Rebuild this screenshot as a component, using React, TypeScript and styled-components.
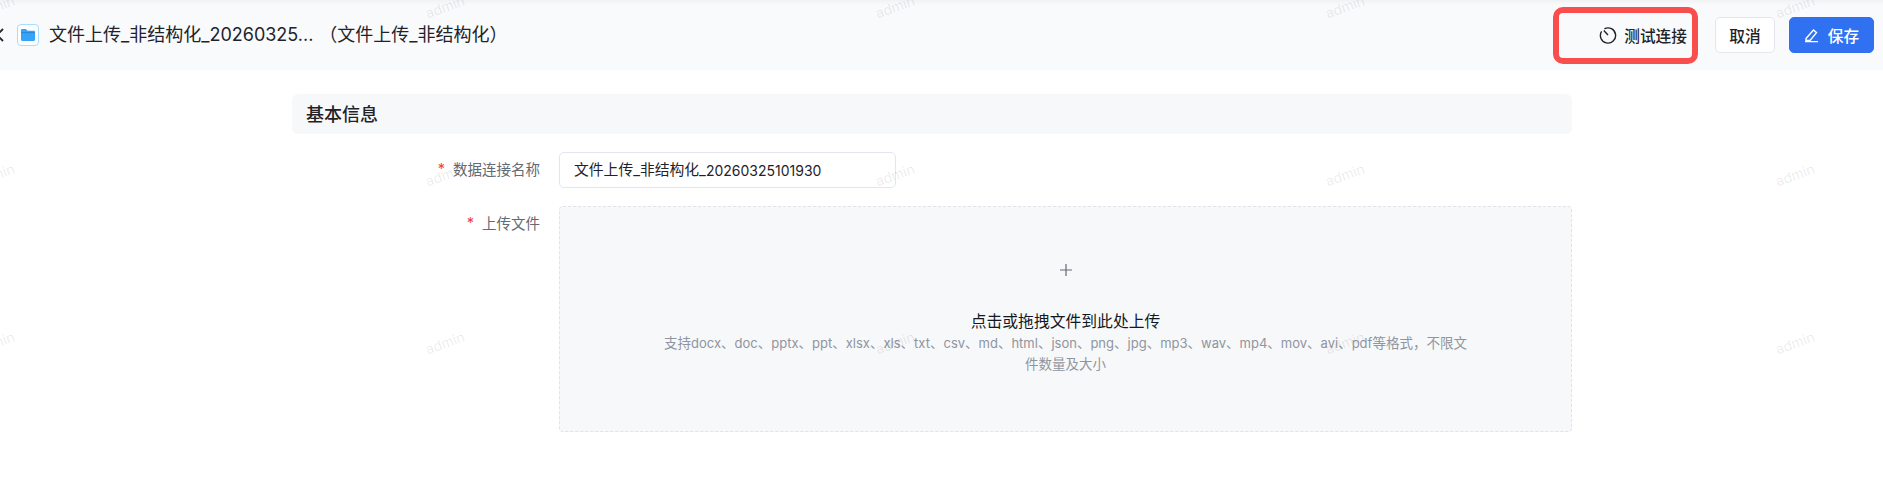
import React from "react";
import styled, { createGlobalStyle } from "styled-components";

const Global = createGlobalStyle`
  html, body { margin: 0; padding: 0; background: #fff; }
  body { font-family: Inter, "Noto Sans CJK SC", sans-serif; color: #1f2329; }
`;

const Page = styled.div`
  position: relative;
  width: 1883px;
  height: 480px;
  overflow: hidden;
  background: #fff;
`;

const Header = styled.header`
  height: 70px;
  box-sizing: border-box;
  display: flex;
  align-items: center;
  padding: 0 9px 0 0;
  background: linear-gradient(#f1f2f4 0, #f9fafc 5px);
`;

const Back = styled.svg`
  width: 14px;
  height: 16px;
  margin-left: -9px;
  margin-right: 12px;
  flex: none;
`;

const FileBadge = styled.span`
  width: 22px;
  height: 22px;
  box-sizing: border-box;
  display: flex;
  align-items: center;
  justify-content: center;
  border: 1px solid #a9dcff;
  border-radius: 4px;
  background: #fbfdff;
  margin-right: 10px;
  flex: none;
`;

const Title = styled.h1`
  margin: 0;
  font-size: 18px;
  font-weight: 400;
  line-height: 24px;
  color: #1f2329;
  white-space: nowrap;
`;

const Suffix = styled.span`
  margin-left: 6px;
`;

const Actions = styled.div`
  margin-left: auto;
  display: flex;
  align-items: center;
`;

const Highlight = styled.div`
  width: 145px;
  height: 57px;
  box-sizing: border-box;
  border: 6px solid #f94e4e;
  border-radius: 10px;
  display: flex;
  align-items: center;
  justify-content: flex-end;
  gap: 7px;
  padding-right: 5px;
  margin-right: 17px;
  font-size: 15.7px;
  font-weight: 500;
  color: #1f2329;
`;

const Button = styled.button<{ $primary?: boolean }>`
  height: 36px;
  box-sizing: border-box;
  display: flex;
  align-items: center;
  justify-content: center;
  gap: 8px;
  padding: 0;
  width: ${(p) => (p.$primary ? "85px" : "60px")};
  margin-left: ${(p) => (p.$primary ? "14px" : "0")};
  border: 1px solid ${(p) => (p.$primary ? "#3071f2" : "#e4e6eb")};
  border-radius: 5px;
  background: ${(p) => (p.$primary ? "#3071f2" : "#fff")};
  color: ${(p) => (p.$primary ? "#fff" : "#1f2329")};
  font-family: inherit;
  font-size: 15.7px;
  font-weight: 500;
`;

const Body = styled.main`
  width: 1280px;
  margin: 24px 0 0 292px;
`;

const SectionBar = styled.div`
  height: 40px;
  box-sizing: border-box;
  display: flex;
  align-items: center;
  padding: 0 0 2px 14px;
  background: #f7f8fa;
  border-radius: 6px;
  font-size: 18px;
  font-weight: 500;
  color: #1f2329;
`;

const Row = styled.div`
  display: grid;
  grid-template-columns: 248px 1013px;
  column-gap: 19px;
  margin-top: 18px;
`;

const Label = styled.label`
  display: flex;
  justify-content: flex-end;
  align-items: center;
  height: 33px;
  font-size: 14.5px;
  color: #646a73;
`;

const Star = styled.span`
  color: #f5403d;
  margin-right: 8px;
`;

const TextField = styled.div`
  width: 337px;
  height: 36px;
  box-sizing: border-box;
  display: flex;
  align-items: center;
  white-space: pre;
  border: 1px solid #e4e6ef;
  border-radius: 5px;
  padding: 0 14px;
  background: #fff;
  font-size: 14px;
  color: #1f2329;
`;

const Han = styled.span<{ $size: number }>`
  font-size: ${(p) => p.$size}px;
  line-height: 1;
`;

const Dropzone = styled.div`
  height: 226px;
  box-sizing: border-box;
  border: 1px dashed #e1e3ea;
  border-radius: 4px;
  background: #f7f8fa;
  display: flex;
  flex-direction: column;
  align-items: center;
  padding-top: 55px;
`;

const Plus = styled.svg`
  width: 16px;
  height: 16px;
  margin-bottom: 33px;
`;

const DropTitle = styled.div`
  font-size: 15.8px;
  font-weight: 400;
  line-height: 22px;
  color: #14181f;
`;

const DropHint = styled.div`
  width: 812px;
  text-align: center;
  font-size: 13px;
  line-height: 21px;
  color: #8f959e;
`;

const WatermarkLayer = styled.div`
  position: absolute;
  inset: 0;
  pointer-events: none;
`;

const Watermark = styled.span`
  position: absolute;
  width: 44px;
  height: 20px;
  line-height: 20px;
  text-align: center;
  font-size: 14px;
  color: rgba(0, 0, 0, 0.09);
  transform: rotate(-20deg);
  white-space: nowrap;
`;

const columns = [-27, 423, 873, 1323, 1773];
const rows = [-3, 165, 333];

function Mixed({ text, size }: { text: string; size: number }) {
  return (
    <>
      {text.split(/([\u3000-\u9fff\uff00-\uffef_]+)/).map((part, i) =>
        i % 2 === 1 ? <Han key={i} $size={size}>{part}</Han> : part
      )}
    </>
  );
}

export default function App() {
  return (
    <Page>
      <Global />
      <Header>
        <Back viewBox="0 0 14 16" fill="none" stroke="#1f2329" strokeWidth="1.8">
          <path d="M12 2 6 8l6 6" />
        </Back>
        <FileBadge>
          <svg width="16" height="14" viewBox="0 0 16 14">
            <path d="M1 2.2C1 1.5 1.5 1 2.2 1h3.6l1.7 1.8h6.3c.7 0 1.2.5 1.2 1.2v7.8c0 .7-.5 1.2-1.2 1.2H2.2c-.7 0-1.2-.5-1.2-1.2z" fill="#36a3f7" />
            <path d="M1 4.6h14" stroke="#1f7fd0" strokeWidth=".8" />
          </svg>
        </FileBadge>
        <Title>
          文件上传_非结构化_20260325...<Suffix>（文件上传_非结构化）</Suffix>
        </Title>
        <Actions>
          <Highlight>
            <svg width="18" height="18" viewBox="0 0 18 18" fill="none" stroke="#1f2329" strokeWidth="1.4">
              <path d="M5.4 2.8A7.6 7.6 0 1 1 2.6 5.4" />
              <path d="M4.8 4.6 9 9" />
            </svg>
            测试连接
          </Highlight>
          <Button>取消</Button>
          <Button $primary>
            <svg width="16" height="16" viewBox="0 0 16 16" fill="none" stroke="#fff" strokeWidth="1.4">
              <path d="M2 11.5 9.5 3l3 2.6L6 13.5H2zM1 14.6h13" />
            </svg>
            保存
          </Button>
        </Actions>
      </Header>
      <Body>
        <SectionBar>基本信息</SectionBar>
        <Row>
          <Label><Star>*</Star>数据连接名称</Label>
          <TextField><Mixed text="文件上传_非结构化_20260325101930" size={14.8} /></TextField>
        </Row>
        <Row>
          <Label><Star>*</Star>上传文件</Label>
          <Dropzone>
            <Plus viewBox="0 0 16 16" fill="none" stroke="#646a73" strokeWidth="1.2">
              <path d="M8 2v12M2 8h12" />
            </Plus>
            <DropTitle>点击或拖拽文件到此处上传</DropTitle>
            <DropHint>
              <Mixed text="支持docx、doc、pptx、ppt、xlsx、xls、txt、csv、md、html、json、png、jpg、mp3、wav、mp4、mov、avi、pdf等格式，不限文件数量及大小" size={13.5} />
            </DropHint>
          </Dropzone>
        </Row>
      </Body>
      <WatermarkLayer>
        {rows.flatMap((y) =>
          columns.map((x) => (
            <Watermark key={`${x}-${y}`} style={{ left: x, top: y }}>admin</Watermark>
          ))
        )}
      </WatermarkLayer>
    </Page>
  );
}
